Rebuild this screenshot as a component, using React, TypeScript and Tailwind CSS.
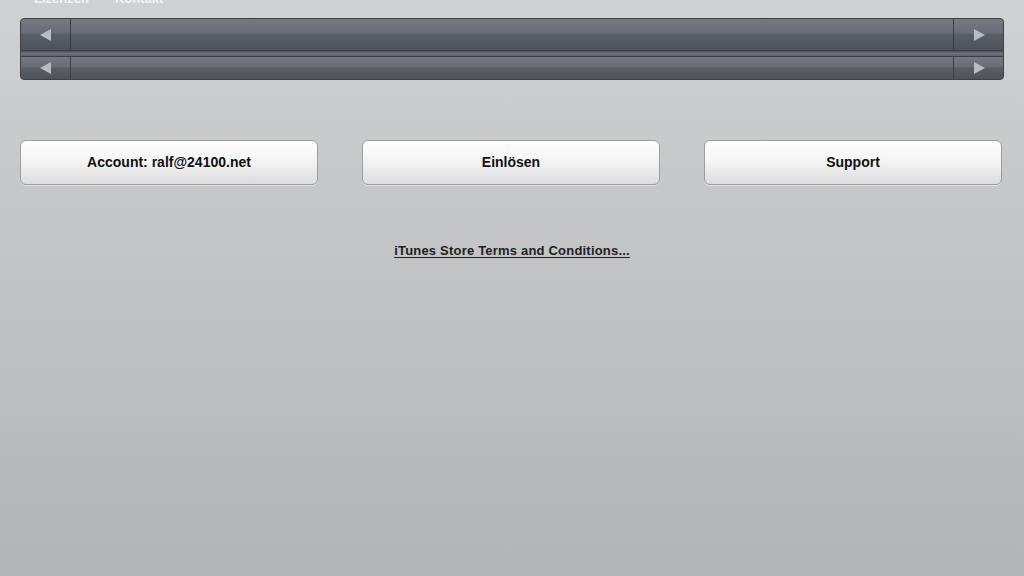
import React from 'react';

function Arrow({ dir }: { dir: 'left' | 'right' }) {
  return (
    <svg width="12" height="12" viewBox="0 0 12 12">
      {dir === 'left' ? (
        <polygon points="11,0 11,12 0,6" fill="#b9bcc2" />
      ) : (
        <polygon points="1,0 1,12 12,6" fill="#b9bcc2" />
      )}
    </svg>
  );
}

function ScrollRow({ tall }: { tall?: boolean }) {
  return (
    <div
      className={`flex ${tall ? 'h-[31px]' : 'h-[22px]'} bg-[linear-gradient(to_bottom,#757981_0%,#686c74_45%,#5a5e66_50%,#4e5259_100%)]`}
    >
      <div className="w-[50px] flex items-center justify-center border-r border-[#3a3d43]">
        <Arrow dir="left" />
      </div>
      <div className="flex-1" />
      <div className="w-[50px] flex items-center justify-center border-l border-[#3a3d43]">
        <Arrow dir="right" />
      </div>
    </div>
  );
}

const buttons = ['Account: ralf@24100.net', 'Einlösen', 'Support'];

export default function App() {
  return (
    <div
      className="w-[1024px] h-[576px] overflow-hidden bg-gradient-to-b from-[#d0d1d3] to-[#b3b4b6]"
      style={{ fontFamily: '"Liberation Sans", Arial, sans-serif' }}
    >
      {/* clipped header text */}
      <div className="h-[5px] overflow-hidden flex items-end px-[34px]">
        <div className="text-[13px] leading-[13px] text-[#f4f4f4] font-bold whitespace-nowrap">
          Lizenzen &nbsp;&nbsp;·&nbsp;&nbsp; Kontakt
        </div>
      </div>

      {/* carousel bar */}
      <div className="mx-[20px] mt-[13px] w-[984px] rounded-[4px] overflow-hidden border border-[#3d4046] bg-[#555960]">
        <ScrollRow tall />
        <div className="h-[7px] bg-gradient-to-b from-[#4a4e55] via-[#6e7279] to-[#5b5f66] border-t border-[#3e4147] border-b border-[#2f3236]" />
        <ScrollRow />
      </div>

      {/* buttons */}
      <div className="mt-[60px] pl-[20px] pr-[22px] grid grid-cols-3 gap-[44px] w-[1024px]">
        {buttons.map((b) => (
          <button
            key={b}
            className="h-[45px] rounded-[6px] border border-[#9c9da0] bg-gradient-to-b from-[#ffffff] via-[#f3f3f3] to-[#dcdcdc] text-[14px] font-bold text-[#111] shadow-[0_1px_0_rgba(255,255,255,0.5)]"
          >
            {b}
          </button>
        ))}
      </div>

      {/* terms link */}
      <div className="mt-[53px] text-center">
        <a className="text-[13px] font-bold text-[#222] underline underline-offset-2 tracking-[0.2px]">
          iTunes Store Terms and Conditions...
        </a>
      </div>
    </div>
  );
}
